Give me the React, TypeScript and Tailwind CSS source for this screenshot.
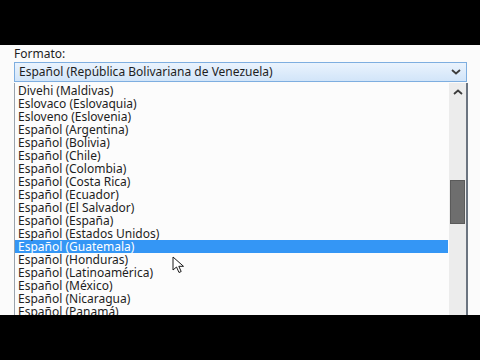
import React from "react";

const items = [
  "Divehi (Maldivas)",
  "Eslovaco (Eslovaquia)",
  "Esloveno (Eslovenia)",
  "Español (Argentina)",
  "Español (Bolivia)",
  "Español (Chile)",
  "Español (Colombia)",
  "Español (Costa Rica)",
  "Español (Ecuador)",
  "Español (El Salvador)",
  "Español (España)",
  "Español (Estados Unidos)",
  "Español (Guatemala)",
  "Español (Honduras)",
  "Español (Latinoamérica)",
  "Español (México)",
  "Español (Nicaragua)",
  "Español (Panamá)",
];

const selected = "Español (Guatemala)";

const App = () => {
  return (
    <div
      className="w-[480px] h-[360px] bg-black flex flex-col overflow-hidden"
      style={{ fontFamily: '"Noto Sans", "Open Sans", sans-serif' }}
    >
      <div className="h-[45px] shrink-0" />

      <div className="h-[270px] shrink-0 bg-[#fbfbfb] relative overflow-hidden text-[12px] text-[#1e1e1e]">
        <div className="pl-[14px] h-[17px] leading-[14px] pt-[2px]">Formato:</div>

        {/* combobox */}
        <div className="ml-[14px] w-[453px] h-[20px] border border-[#7eaee0] bg-gradient-to-b from-[#eaf3fd] to-[#d2e5f9] flex items-center justify-between pl-[4px] pr-[4px]">
          <span className="leading-[18px]">Español (República Bolivariana de Venezuela)</span>
          <svg width="10" height="6" viewBox="0 0 10 6" className="mr-[1px]">
            <path d="M1 1 L5 4.5 L9 1" fill="none" stroke="#3c3c3c" strokeWidth="1.8" />
          </svg>
        </div>

        {/* dropdown list */}
        <div className="ml-[14px] w-[454px] h-[240px] mt-[1px] flex border-l border-[#9aa3ad] bg-[#fcfcfc]">
          <div className="flex-1 pt-[1px] pr-[1px]">
            {items.map((item) => (
              <div
                key={item}
                className={
                  item === selected
                    ? "h-[13px] leading-[13px] pl-[3px] bg-[#3496f5] text-white"
                    : "h-[13px] leading-[13px] pl-[3px]"
                }
              >
                {item}
              </div>
            ))}
          </div>

          {/* scrollbar */}
          <div className="w-[17px] bg-[#ececec] flex flex-col items-center">
            <svg width="10" height="6" viewBox="0 0 10 6" className="mt-[6px]">
              <path d="M1 5 L5 1.5 L9 5" fill="none" stroke="#3c3c3c" strokeWidth="1.8" />
            </svg>
            <div className="mt-[85px] w-[15px] h-[44px] bg-[#6e6e6e] border border-[#5a5a5a]" />
          </div>
          <div className="w-[2px] bg-[#6b7480]" />
        </div>

        {/* mouse cursor */}
        <svg
          width="14"
          height="18"
          viewBox="0 0 14 18"
          className="absolute left-[172px] top-[211px]"
        >
          <path
            d="M1 1 L1 14 L4.5 11 L7 16.5 L9.2 15.5 L6.8 10.3 L11.5 10.3 Z"
            fill="#ffffff"
            stroke="#1a1a1a"
            strokeWidth="1"
            strokeLinejoin="round"
          />
        </svg>
      </div>

      <div className="flex-1" />
    </div>
  );
};

export default App;
